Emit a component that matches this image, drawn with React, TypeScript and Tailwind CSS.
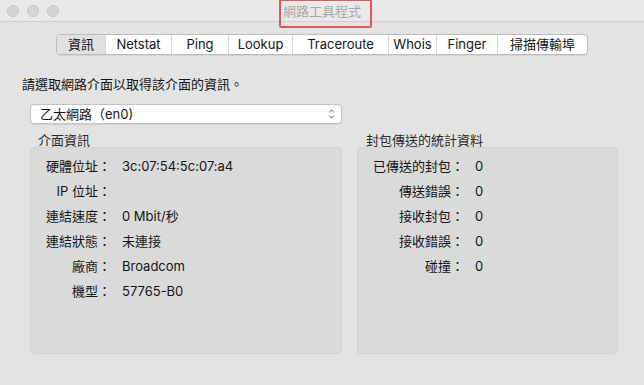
import { ChevronDown, ChevronUp } from 'lucide-react'

const tabs = [
  { label: '資訊', w: 'w-[48px]' },
  { label: 'Netstat', w: 'w-[66px]' },
  { label: 'Ping', w: 'w-[57px]' },
  { label: 'Lookup', w: 'w-[64px]' },
  { label: 'Traceroute', w: 'w-[96px]' },
  { label: 'Whois', w: 'w-[48px]' },
  { label: 'Finger', w: 'w-[61px]' },
  { label: '掃描傳輸埠', w: 'w-[90px]' },
]

const interfaceRows = [
  ['硬體位址：', '3c:07:54:5c:07:a4'],
  ['IP 位址：', ''],
  ['連結速度：', '0 Mbit/秒'],
  ['連結狀態：', '未連接'],
  ['廠商：', 'Broadcom'],
  ['機型：', '57765-B0'],
]

const statRows = [
  ['已傳送的封包：', '0'],
  ['傳送錯誤：', '0'],
  ['接收封包：', '0'],
  ['接收錯誤：', '0'],
  ['碰撞：', '0'],
]

export default function App() {
  return (
    <div className="relative w-[644px] h-[385px] overflow-hidden bg-[#e3e3e3] text-[13px] text-[#141414] font-['Inter','Noto_Sans_CJK_TC',sans-serif]">
      {/* Title bar */}
      <div className="h-[22px] grid grid-cols-[1fr_auto_1fr] items-center bg-[#e9e9e9] border-b border-[#d0d0d0]">
        <div className="flex gap-[8px] pl-[7px]">
          <div className="w-[12px] h-[12px] rounded-full bg-[#d5d5d5] border border-[#c6c6c6]" />
          <div className="w-[12px] h-[12px] rounded-full bg-[#d5d5d5] border border-[#c6c6c6]" />
          <div className="w-[12px] h-[12px] rounded-full bg-[#d5d5d5] border border-[#c6c6c6]" />
        </div>
        <div className="text-[13px] leading-[16px] text-[#a8a8a8]">網路工具程式</div>
        <div />
      </div>

      {/* annotation box around the title */}
      <div className="absolute left-[279px] top-[-1px] w-[93px] h-[29px] border-2 border-[#e6575c] rounded-[2px]" />

      {/* Tabs */}
      <div className="mt-[12px] flex justify-center">
        <div className="flex h-[21px] bg-white border border-[#bcbcbc] rounded-[4px] overflow-hidden shadow-[0_1px_0_rgba(0,0,0,0.06)]">
          {tabs.map((t, i) => (
            <div
              key={t.label}
              className={`${t.w} ${i > 0 ? 'border-l border-[#d6d6d6]' : ''} ${i === 0 ? 'bg-[#e1e1e1]' : ''} text-center leading-[19px]`}
            >
              {t.label}
            </div>
          ))}
        </div>
      </div>

      <div className="pl-[22px] mt-[21px] leading-[16px]">請選取網路介面以取得該介面的資訊。</div>

      {/* Select */}
      <div className="ml-[30px] mt-[12px] w-[312px] h-[20px] flex items-center justify-between bg-white border border-[#c3c3c3] rounded-[4px] shadow-[0_1px_1px_rgba(0,0,0,0.08)] pl-[9px] pr-[4px]">
        <span className="leading-[18px]">乙太網路（en0)</span>
        <span className="flex flex-col items-center text-[#333]">
          <ChevronUp className="w-[11px] h-[8px] -mb-[2px]" strokeWidth={2.5} />
          <ChevronDown className="w-[11px] h-[8px]" strokeWidth={2.5} />
        </span>
      </div>

      {/* Groups */}
      <div className="flex gap-[15px] pl-[30px] mt-[9px]">
        <div className="w-[312px]">
          <div className="pl-[8px] leading-[15px] h-[15px] text-[#2a2a2a]">介面資訊</div>
          <div className="mt-[-1px] h-[207px] bg-[#dadada] border border-[#d3d3d3] rounded-[4px] pt-[6px] pl-[15px]">
            <div className="grid grid-cols-[65px_1fr] gap-x-[11px]">
              {interfaceRows.map(([k, v]) => (
                <div key={k} className="contents">
                  <div className="text-right leading-[25px] h-[25px]">{k}</div>
                  <div className="leading-[25px] h-[25px]">{v}</div>
                </div>
              ))}
            </div>
          </div>
        </div>
        <div className="w-[261px]">
          <div className="pl-[9px] leading-[15px] h-[15px] text-[#2a2a2a]">封包傳送的統計資料</div>
          <div className="mt-[-1px] h-[207px] bg-[#dadada] border border-[#d3d3d3] rounded-[4px] pt-[6px] pl-[15px]">
            <div className="grid grid-cols-[91px_1fr] gap-x-[11px]">
              {statRows.map(([k, v]) => (
                <div key={k} className="contents">
                  <div className="text-right leading-[25px] h-[25px]">{k}</div>
                  <div className="leading-[25px] h-[25px]">{v}</div>
                </div>
              ))}
            </div>
          </div>
        </div>
      </div>
    </div>
  )
}
